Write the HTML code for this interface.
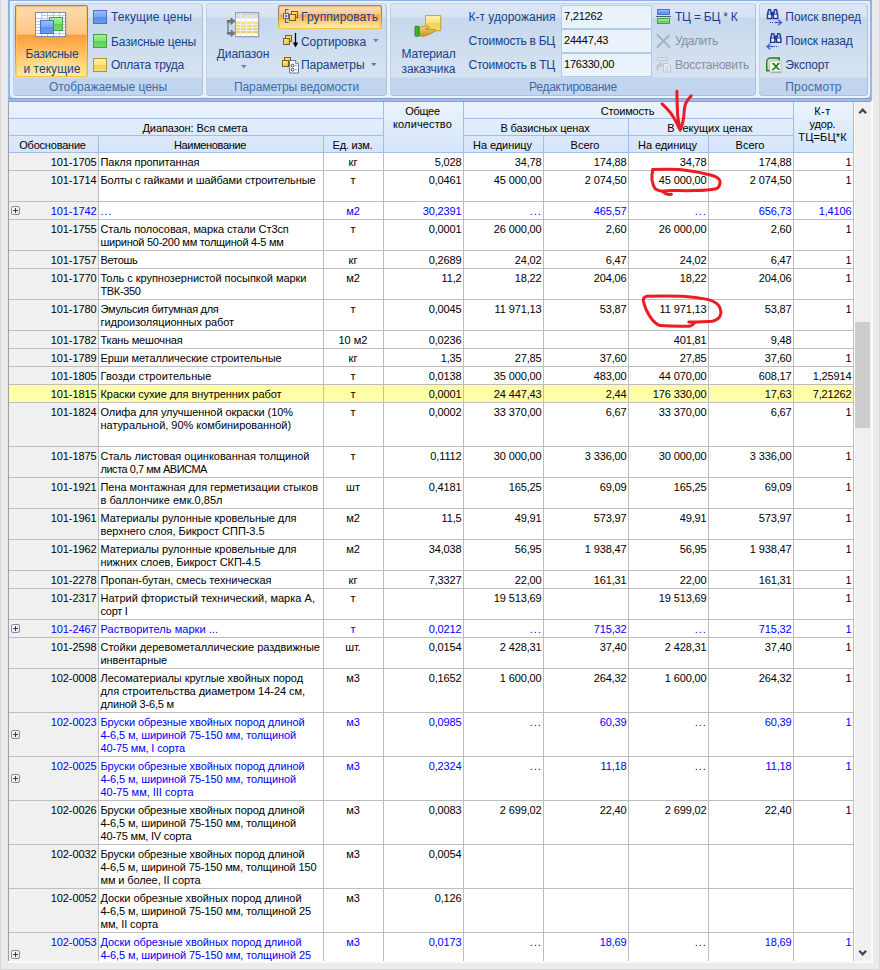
<!DOCTYPE html><html><head><meta charset="utf-8"><title>Ведомость ресурсов</title><style>
*{box-sizing:border-box;margin:0;padding:0}
html,body{width:880px;height:970px;overflow:hidden}
body{position:relative;background:#ebebeb;font-family:"Liberation Sans",sans-serif;font-size:11px;color:#000}
.abs,.c,.h,.vl,.hl,.rt{position:absolute}
#grid{position:absolute;left:8px;top:101px;width:863px;height:860px;background:#fff;overflow:hidden}
.c{height:13px;line-height:13px;white-space:nowrap;overflow:visible}
.r{text-align:right;letter-spacing:-.12px}.m{text-align:center;padding-right:1px}
.b{color:#0000ff}
.vl{width:1px;background:#bdbdbd}
.hl{height:1px;background:#bdbdbd}
.h{background:linear-gradient(#e9f1fc,#d5e5fa);border-right:1px solid #9dbfea;border-bottom:1px solid #9dbfea;text-align:center;line-height:13px;white-space:nowrap;padding-right:2px}
.pl{position:absolute;width:9px;height:9px;border:1px solid #8e8e8e;border-radius:2px;background:linear-gradient(135deg,#fff,#e4e4e4)}
.pl:before{content:"";position:absolute;left:1px;top:3px;width:5px;height:1px;background:#1c3a8c}
.pl:after{content:"";position:absolute;left:3px;top:1px;width:1px;height:5px;background:#1c3a8c}
.rt{white-space:nowrap;color:#15428b;font-size:12px;line-height:14px}
.gr{position:absolute;top:3px;height:93px;border:1px solid #a9c1de;border-left-color:#c0d2e8;border-top-color:#c3d4e9;border-radius:4px;background:linear-gradient(#dde7f5 0px,#d6e2f2 13px,#c7d8ed 14px,#d7e3f1 73px,#c1d6ee 74px,#c1d6ee 100%);box-shadow:0 0 0 2px rgba(234,243,252,.85)}
.cap{position:absolute;left:0;right:0;top:76px;height:16px;text-align:center;color:#3e6aaa;font-size:12px;line-height:14px;white-space:nowrap}
.ed{position:absolute;left:561px;width:91px;height:24px;border:1px solid #b3cbe6;background:#eaf2fb;font-size:11px;line-height:13px;padding:4px 0 0 2px;color:#000;letter-spacing:-.2px}
</style></head><body>
<div class="abs" style="left:0;top:0;width:1px;height:970px;background:#d6d6d6"></div>
<div class="abs" style="left:879px;top:0;width:1px;height:970px;background:#d8d8d8"></div>
<div class="abs" style="left:0;top:969px;width:880px;height:1px;background:#d8d8d8"></div>
<div class="abs" style="left:871px;top:101px;width:2px;height:862px;background:#fafafa"></div>
<div class="abs" style="left:8px;top:961px;width:865px;height:2px;background:#fafafa"></div>
<div id="grid">
<div class="vl" style="left:0;top:0;height:860px;background:#a0a0a0"></div>
<div class="hl" style="left:0;top:0;width:863px;background:#a0a0a0"></div>
<div class="abs" style="left:1px;top:52px;width:89px;height:808px;background:#f0f0f0"></div>
<div class="abs" style="left:847px;top:1px;width:16px;height:859px;background:#f0f0f0"></div>
<div class="abs" style="left:847px;top:221px;width:15px;height:106px;background:#cdcdcd"></div>
<svg class="abs" style="left:847px;top:4px" width="16" height="12" viewBox="0 0 16 12"><path d="M4.3 8.300L7.700 4.700L11.100 8.300" fill="none" stroke="#464646" stroke-width="2.2"/></svg>
<svg class="abs" style="left:847px;top:846px" width="16" height="12" viewBox="0 0 16 12"><path d="M4.3 3.700L7.700 7.300L11.100 3.700" fill="none" stroke="#464646" stroke-width="2.2"/></svg>
<div class="h" style="left:1px;top:1px;width:375px;height:17px;padding-top:0px;background:linear-gradient(#ebf3fd,#e4effc)"></div>
<div class="h" style="left:1px;top:18px;width:375px;height:17px;padding-top:3px;background:linear-gradient(#e4eefc,#ddeafb)"><span id="t1" style="letter-spacing:-0.084px;">Диапазон: Вся смета</span></div>
<div class="h" style="left:1px;top:35px;width:90px;height:17px;padding-top:3px;background:linear-gradient(#dde9fb,#d6e5fa)"><span id="t2" style="letter-spacing:-0.213px;">Обоснование</span></div>
<div class="h" style="left:91px;top:35px;width:225px;height:17px;padding-top:3px;background:linear-gradient(#dde9fb,#d6e5fa)"><span id="t3" style="letter-spacing:-0.355px;">Наименование</span></div>
<div class="h" style="left:316px;top:35px;width:60px;height:17px;padding-top:3px;background:linear-gradient(#dde9fb,#d6e5fa)"><span id="t4" style="letter-spacing:-0.211px;">Ед. изм.</span></div>
<div class="h" style="left:376px;top:1px;width:80px;height:51px;padding-top:3px;background:linear-gradient(#ebf3fd,#d6e5fa)"><span id="t5" style="letter-spacing:-0.306px;">Общее</span><br><span id="t6" style="letter-spacing:0.139px;">количество</span></div>
<div class="h" style="left:456px;top:1px;width:330px;height:17px;padding-top:3px;background:linear-gradient(#ebf3fd,#e4effc)"><span id="t7" style="letter-spacing:-0.175px;">Стоимость</span></div>
<div class="h" style="left:456px;top:18px;width:165px;height:17px;padding-top:3px;background:linear-gradient(#e4eefc,#ddeafb)"><span id="t8" style="letter-spacing:-0.166px;">В базисных ценах</span></div>
<div class="h" style="left:621px;top:18px;width:165px;height:17px;padding-top:3px;background:linear-gradient(#e4eefc,#ddeafb)"><span id="t9">В текущих ценах</span></div>
<div class="h" style="left:456px;top:35px;width:80px;height:17px;padding-top:3px;background:linear-gradient(#dde9fb,#d6e5fa)"><span id="t10" style="letter-spacing:-0.078px;">На единицу</span></div>
<div class="h" style="left:536px;top:35px;width:85px;height:17px;padding-top:3px;background:linear-gradient(#dde9fb,#d6e5fa)"><span id="t11">Всего</span></div>
<div class="h" style="left:621px;top:35px;width:80px;height:17px;padding-top:3px;background:linear-gradient(#dde9fb,#d6e5fa)"><span id="t12" style="letter-spacing:-0.078px;">На единицу</span></div>
<div class="h" style="left:701px;top:35px;width:85px;height:17px;padding-top:3px;background:linear-gradient(#dde9fb,#d6e5fa)"><span id="t13">Всего</span></div>
<div class="h" style="left:786px;top:1px;width:60px;height:51px;padding-top:3px;background:linear-gradient(#ebf3fd,#d6e5fa)"><span id="t14" style="letter-spacing:0.497px;">К-т</span><br><span id="t15" style="letter-spacing:-0.192px;">удор.</span><br><span id="t16" style="letter-spacing:0.153px;">ТЦ=БЦ*К</span></div>
<div class="c r" style="left:1px;top:55px;width:87.4px"><span id="t17">101-1705</span></div>
<div class="c" style="left:92.5px;top:55px;width:222px"><span id="t18" style="letter-spacing:-0.056px;">Пакля пропитанная</span></div>
<div class="c m" style="left:316px;top:55px;width:59px"><span id="t19">кг</span></div>
<div class="c r" style="left:376px;top:55px;width:77.6px"><span id="t20">5,028</span></div>
<div class="c r" style="left:456px;top:55px;width:77.6px"><span id="t21">34,78</span></div>
<div class="c r" style="left:536px;top:55px;width:82.6px"><span id="t22">174,88</span></div>
<div class="c r" style="left:621px;top:55px;width:77.6px"><span id="t23">34,78</span></div>
<div class="c r" style="left:701px;top:55px;width:82.6px"><span id="t24">174,88</span></div>
<div class="c r" style="left:786px;top:55px;width:57.6px"><span id="t25">1</span></div>
<div class="hl" style="left:1px;top:69px;width:845px"></div>
<div class="c r" style="left:1px;top:73px;width:87.4px"><span id="t26">101-1714</span></div>
<div class="c" style="left:92.5px;top:73px;width:222px"><span id="t27" style="letter-spacing:-0.108px;">Болты с гайками и шайбами строительные</span></div>
<div class="c m" style="left:316px;top:73px;width:59px"><span id="t28">т</span></div>
<div class="c r" style="left:376px;top:73px;width:77.6px"><span id="t29">0,0461</span></div>
<div class="c r" style="left:456px;top:73px;width:77.6px"><span id="t30">45 000,00</span></div>
<div class="c r" style="left:536px;top:73px;width:82.6px"><span id="t31">2 074,50</span></div>
<div class="c r" style="left:621px;top:73px;width:77.6px"><span id="t32">45 000,00</span></div>
<div class="c r" style="left:701px;top:73px;width:82.6px"><span id="t33">2 074,50</span></div>
<div class="c r" style="left:786px;top:73px;width:57.6px"><span id="t34">1</span></div>
<div class="hl" style="left:1px;top:100px;width:845px"></div>
<div class="pl" style="left:3px;top:105px"></div>
<div class="c r b" style="left:1px;top:104px;width:87.4px"><span id="t35">101-1742</span></div>
<div class="c b" style="left:92.5px;top:104px;width:222px"><span id="t36" style="letter-spacing:0.776px;">...</span></div>
<div class="c m b" style="left:316px;top:104px;width:59px"><span id="t37">м2</span></div>
<div class="c r b" style="left:376px;top:104px;width:77.6px"><span id="t38">30,2391</span></div>
<div class="c r b" style="left:456px;top:104px;width:77.6px"><span id="t39" style="letter-spacing:0.896px;">...</span></div>
<div class="c r b" style="left:536px;top:104px;width:82.6px"><span id="t40">465,57</span></div>
<div class="c r b" style="left:621px;top:104px;width:77.6px"><span id="t41" style="letter-spacing:0.896px;">...</span></div>
<div class="c r b" style="left:701px;top:104px;width:82.6px"><span id="t42">656,73</span></div>
<div class="c r b" style="left:786px;top:104px;width:57.6px"><span id="t43">1,4106</span></div>
<div class="hl" style="left:1px;top:118px;width:845px"></div>
<div class="c r" style="left:1px;top:122px;width:87.4px"><span id="t44">101-1755</span></div>
<div class="c" style="left:92.5px;top:122px;width:222px"><span id="t45" style="letter-spacing:-0.084px;">Сталь полосовая, марка стали Ст3сп</span></div>
<div class="c" style="left:92.5px;top:135px;width:222px"><span id="t46" style="letter-spacing:-0.273px;">шириной 50-200 мм толщиной 4-5 мм</span></div>
<div class="c m" style="left:316px;top:122px;width:59px"><span id="t47">т</span></div>
<div class="c r" style="left:376px;top:122px;width:77.6px"><span id="t48">0,0001</span></div>
<div class="c r" style="left:456px;top:122px;width:77.6px"><span id="t49">26 000,00</span></div>
<div class="c r" style="left:536px;top:122px;width:82.6px"><span id="t50">2,60</span></div>
<div class="c r" style="left:621px;top:122px;width:77.6px"><span id="t51">26 000,00</span></div>
<div class="c r" style="left:701px;top:122px;width:82.6px"><span id="t52">2,60</span></div>
<div class="c r" style="left:786px;top:122px;width:57.6px"><span id="t53">1</span></div>
<div class="hl" style="left:1px;top:149px;width:845px"></div>
<div class="c r" style="left:1px;top:153px;width:87.4px"><span id="t54">101-1757</span></div>
<div class="c" style="left:92.5px;top:153px;width:222px"><span id="t55" style="letter-spacing:-0.281px;">Ветошь</span></div>
<div class="c m" style="left:316px;top:153px;width:59px"><span id="t56">кг</span></div>
<div class="c r" style="left:376px;top:153px;width:77.6px"><span id="t57">0,2689</span></div>
<div class="c r" style="left:456px;top:153px;width:77.6px"><span id="t58">24,02</span></div>
<div class="c r" style="left:536px;top:153px;width:82.6px"><span id="t59">6,47</span></div>
<div class="c r" style="left:621px;top:153px;width:77.6px"><span id="t60">24,02</span></div>
<div class="c r" style="left:701px;top:153px;width:82.6px"><span id="t61">6,47</span></div>
<div class="c r" style="left:786px;top:153px;width:57.6px"><span id="t62">1</span></div>
<div class="hl" style="left:1px;top:167px;width:845px"></div>
<div class="c r" style="left:1px;top:171px;width:87.4px"><span id="t63">101-1770</span></div>
<div class="c" style="left:92.5px;top:171px;width:222px"><span id="t64" style="letter-spacing:-0.038px;">Толь с крупнозернистой посыпкой марки</span></div>
<div class="c" style="left:92.5px;top:184px;width:222px"><span id="t65" style="letter-spacing:-0.355px;">ТВК-350</span></div>
<div class="c m" style="left:316px;top:171px;width:59px"><span id="t66">м2</span></div>
<div class="c r" style="left:376px;top:171px;width:77.6px"><span id="t67">11,2</span></div>
<div class="c r" style="left:456px;top:171px;width:77.6px"><span id="t68">18,22</span></div>
<div class="c r" style="left:536px;top:171px;width:82.6px"><span id="t69">204,06</span></div>
<div class="c r" style="left:621px;top:171px;width:77.6px"><span id="t70">18,22</span></div>
<div class="c r" style="left:701px;top:171px;width:82.6px"><span id="t71">204,06</span></div>
<div class="c r" style="left:786px;top:171px;width:57.6px"><span id="t72">1</span></div>
<div class="hl" style="left:1px;top:198px;width:845px"></div>
<div class="c r" style="left:1px;top:202px;width:87.4px"><span id="t73">101-1780</span></div>
<div class="c" style="left:92.5px;top:202px;width:222px"><span id="t74" style="letter-spacing:-0.289px;">Эмульсия битумная для</span></div>
<div class="c" style="left:92.5px;top:215px;width:222px"><span id="t75" style="letter-spacing:-0.050px;">гидроизоляционных работ</span></div>
<div class="c m" style="left:316px;top:202px;width:59px"><span id="t76">т</span></div>
<div class="c r" style="left:376px;top:202px;width:77.6px"><span id="t77">0,0045</span></div>
<div class="c r" style="left:456px;top:202px;width:77.6px"><span id="t78">11 971,13</span></div>
<div class="c r" style="left:536px;top:202px;width:82.6px"><span id="t79">53,87</span></div>
<div class="c r" style="left:621px;top:202px;width:77.6px"><span id="t80">11 971,13</span></div>
<div class="c r" style="left:701px;top:202px;width:82.6px"><span id="t81">53,87</span></div>
<div class="c r" style="left:786px;top:202px;width:57.6px"><span id="t82">1</span></div>
<div class="hl" style="left:1px;top:229px;width:845px"></div>
<div class="c r" style="left:1px;top:233px;width:87.4px"><span id="t83">101-1782</span></div>
<div class="c" style="left:92.5px;top:233px;width:222px"><span id="t84" style="letter-spacing:-0.181px;">Ткань мешочная</span></div>
<div class="c m" style="left:316px;top:233px;width:59px"><span id="t85">10 м2</span></div>
<div class="c r" style="left:376px;top:233px;width:77.6px"><span id="t86">0,0236</span></div>
<div class="c r" style="left:621px;top:233px;width:77.6px"><span id="t87">401,81</span></div>
<div class="c r" style="left:701px;top:233px;width:82.6px"><span id="t88">9,48</span></div>
<div class="hl" style="left:1px;top:247px;width:845px"></div>
<div class="c r" style="left:1px;top:251px;width:87.4px"><span id="t89">101-1789</span></div>
<div class="c" style="left:92.5px;top:251px;width:222px"><span id="t90" style="letter-spacing:-0.101px;">Ерши металлические строительные</span></div>
<div class="c m" style="left:316px;top:251px;width:59px"><span id="t91">кг</span></div>
<div class="c r" style="left:376px;top:251px;width:77.6px"><span id="t92">1,35</span></div>
<div class="c r" style="left:456px;top:251px;width:77.6px"><span id="t93">27,85</span></div>
<div class="c r" style="left:536px;top:251px;width:82.6px"><span id="t94">37,60</span></div>
<div class="c r" style="left:621px;top:251px;width:77.6px"><span id="t95">27,85</span></div>
<div class="c r" style="left:701px;top:251px;width:82.6px"><span id="t96">37,60</span></div>
<div class="c r" style="left:786px;top:251px;width:57.6px"><span id="t97">1</span></div>
<div class="hl" style="left:1px;top:265px;width:845px"></div>
<div class="c r" style="left:1px;top:269px;width:87.4px"><span id="t98">101-1805</span></div>
<div class="c" style="left:92.5px;top:269px;width:222px"><span id="t99" style="letter-spacing:0.089px;">Гвозди строительные</span></div>
<div class="c m" style="left:316px;top:269px;width:59px"><span id="t100">т</span></div>
<div class="c r" style="left:376px;top:269px;width:77.6px"><span id="t101">0,0138</span></div>
<div class="c r" style="left:456px;top:269px;width:77.6px"><span id="t102">35 000,00</span></div>
<div class="c r" style="left:536px;top:269px;width:82.6px"><span id="t103">483,00</span></div>
<div class="c r" style="left:621px;top:269px;width:77.6px"><span id="t104">44 070,00</span></div>
<div class="c r" style="left:701px;top:269px;width:82.6px"><span id="t105">608,17</span></div>
<div class="c r" style="left:786px;top:269px;width:57.6px"><span id="t106">1,25914</span></div>
<div class="hl" style="left:1px;top:283px;width:845px"></div>
<div class="abs" style="left:1px;top:284px;width:844px;height:17px;background:#ffffa8"></div>
<div class="c r" style="left:1px;top:287px;width:87.4px"><span id="t107">101-1815</span></div>
<div class="c" style="left:92.5px;top:287px;width:222px"><span id="t108" style="letter-spacing:-0.055px;">Краски сухие для внутренних работ</span></div>
<div class="c m" style="left:316px;top:287px;width:59px"><span id="t109">т</span></div>
<div class="c r" style="left:376px;top:287px;width:77.6px"><span id="t110">0,0001</span></div>
<div class="c r" style="left:456px;top:287px;width:77.6px"><span id="t111">24 447,43</span></div>
<div class="c r" style="left:536px;top:287px;width:82.6px"><span id="t112">2,44</span></div>
<div class="c r" style="left:621px;top:287px;width:77.6px"><span id="t113">176 330,00</span></div>
<div class="c r" style="left:701px;top:287px;width:82.6px"><span id="t114">17,63</span></div>
<div class="c r" style="left:786px;top:287px;width:57.6px"><span id="t115">7,21262</span></div>
<div class="hl" style="left:1px;top:301px;width:845px"></div>
<div class="c r" style="left:1px;top:305px;width:87.4px"><span id="t116">101-1824</span></div>
<div class="c" style="left:92.5px;top:305px;width:222px"><span id="t117" style="letter-spacing:-0.068px;">Олифа для улучшенной окраски (10%</span></div>
<div class="c" style="left:92.5px;top:318px;width:222px"><span id="t118" style="letter-spacing:-0.036px;">натуральной, 90% комбинированной)</span></div>
<div class="c m" style="left:316px;top:305px;width:59px"><span id="t119">т</span></div>
<div class="c r" style="left:376px;top:305px;width:77.6px"><span id="t120">0,0002</span></div>
<div class="c r" style="left:456px;top:305px;width:77.6px"><span id="t121">33 370,00</span></div>
<div class="c r" style="left:536px;top:305px;width:82.6px"><span id="t122">6,67</span></div>
<div class="c r" style="left:621px;top:305px;width:77.6px"><span id="t123">33 370,00</span></div>
<div class="c r" style="left:701px;top:305px;width:82.6px"><span id="t124">6,67</span></div>
<div class="c r" style="left:786px;top:305px;width:57.6px"><span id="t125">1</span></div>
<div class="hl" style="left:1px;top:345px;width:845px"></div>
<div class="c r" style="left:1px;top:349px;width:87.4px"><span id="t126">101-1875</span></div>
<div class="c" style="left:92.5px;top:349px;width:222px"><span id="t127" style="letter-spacing:-0.019px;">Сталь листовая оцинкованная толщиной</span></div>
<div class="c" style="left:92.5px;top:362px;width:222px"><span id="t128" style="letter-spacing:-0.479px;">листа 0,7 мм АВИСМА</span></div>
<div class="c m" style="left:316px;top:349px;width:59px"><span id="t129">т</span></div>
<div class="c r" style="left:376px;top:349px;width:77.6px"><span id="t130">0,1112</span></div>
<div class="c r" style="left:456px;top:349px;width:77.6px"><span id="t131">30 000,00</span></div>
<div class="c r" style="left:536px;top:349px;width:82.6px"><span id="t132">3 336,00</span></div>
<div class="c r" style="left:621px;top:349px;width:77.6px"><span id="t133">30 000,00</span></div>
<div class="c r" style="left:701px;top:349px;width:82.6px"><span id="t134">3 336,00</span></div>
<div class="c r" style="left:786px;top:349px;width:57.6px"><span id="t135">1</span></div>
<div class="hl" style="left:1px;top:376px;width:845px"></div>
<div class="c r" style="left:1px;top:380px;width:87.4px"><span id="t136">101-1921</span></div>
<div class="c" style="left:92.5px;top:380px;width:222px"><span id="t137" style="letter-spacing:-0.043px;">Пена монтажная для герметизации стыков</span></div>
<div class="c" style="left:92.5px;top:393px;width:222px"><span id="t138" style="letter-spacing:0.018px;">в баллончике емк.0,85л</span></div>
<div class="c m" style="left:316px;top:380px;width:59px"><span id="t139">шт</span></div>
<div class="c r" style="left:376px;top:380px;width:77.6px"><span id="t140">0,4181</span></div>
<div class="c r" style="left:456px;top:380px;width:77.6px"><span id="t141">165,25</span></div>
<div class="c r" style="left:536px;top:380px;width:82.6px"><span id="t142">69,09</span></div>
<div class="c r" style="left:621px;top:380px;width:77.6px"><span id="t143">165,25</span></div>
<div class="c r" style="left:701px;top:380px;width:82.6px"><span id="t144">69,09</span></div>
<div class="c r" style="left:786px;top:380px;width:57.6px"><span id="t145">1</span></div>
<div class="hl" style="left:1px;top:407px;width:845px"></div>
<div class="c r" style="left:1px;top:411px;width:87.4px"><span id="t146">101-1961</span></div>
<div class="c" style="left:92.5px;top:411px;width:222px"><span id="t147" style="letter-spacing:-0.052px;">Материалы рулонные кровельные для</span></div>
<div class="c" style="left:92.5px;top:424px;width:222px"><span id="t148" style="letter-spacing:-0.047px;">верхнего слоя, Бикрост СПП-3.5</span></div>
<div class="c m" style="left:316px;top:411px;width:59px"><span id="t149">м2</span></div>
<div class="c r" style="left:376px;top:411px;width:77.6px"><span id="t150">11,5</span></div>
<div class="c r" style="left:456px;top:411px;width:77.6px"><span id="t151">49,91</span></div>
<div class="c r" style="left:536px;top:411px;width:82.6px"><span id="t152">573,97</span></div>
<div class="c r" style="left:621px;top:411px;width:77.6px"><span id="t153">49,91</span></div>
<div class="c r" style="left:701px;top:411px;width:82.6px"><span id="t154">573,97</span></div>
<div class="c r" style="left:786px;top:411px;width:57.6px"><span id="t155">1</span></div>
<div class="hl" style="left:1px;top:438px;width:845px"></div>
<div class="c r" style="left:1px;top:442px;width:87.4px"><span id="t156">101-1962</span></div>
<div class="c" style="left:92.5px;top:442px;width:222px"><span id="t157" style="letter-spacing:-0.052px;">Материалы рулонные кровельные для</span></div>
<div class="c" style="left:92.5px;top:455px;width:222px"><span id="t158" style="letter-spacing:-0.062px;">нижних слоев, Бикрост СКП-4.5</span></div>
<div class="c m" style="left:316px;top:442px;width:59px"><span id="t159">м2</span></div>
<div class="c r" style="left:376px;top:442px;width:77.6px"><span id="t160">34,038</span></div>
<div class="c r" style="left:456px;top:442px;width:77.6px"><span id="t161">56,95</span></div>
<div class="c r" style="left:536px;top:442px;width:82.6px"><span id="t162">1 938,47</span></div>
<div class="c r" style="left:621px;top:442px;width:77.6px"><span id="t163">56,95</span></div>
<div class="c r" style="left:701px;top:442px;width:82.6px"><span id="t164">1 938,47</span></div>
<div class="c r" style="left:786px;top:442px;width:57.6px"><span id="t165">1</span></div>
<div class="hl" style="left:1px;top:469px;width:845px"></div>
<div class="c r" style="left:1px;top:473px;width:87.4px"><span id="t166">101-2278</span></div>
<div class="c" style="left:92.5px;top:473px;width:222px"><span id="t167" style="letter-spacing:-0.071px;">Пропан-бутан, смесь техническая</span></div>
<div class="c m" style="left:316px;top:473px;width:59px"><span id="t168">кг</span></div>
<div class="c r" style="left:376px;top:473px;width:77.6px"><span id="t169">7,3327</span></div>
<div class="c r" style="left:456px;top:473px;width:77.6px"><span id="t170">22,00</span></div>
<div class="c r" style="left:536px;top:473px;width:82.6px"><span id="t171">161,31</span></div>
<div class="c r" style="left:621px;top:473px;width:77.6px"><span id="t172">22,00</span></div>
<div class="c r" style="left:701px;top:473px;width:82.6px"><span id="t173">161,31</span></div>
<div class="c r" style="left:786px;top:473px;width:57.6px"><span id="t174">1</span></div>
<div class="hl" style="left:1px;top:487px;width:845px"></div>
<div class="c r" style="left:1px;top:491px;width:87.4px"><span id="t175">101-2317</span></div>
<div class="c" style="left:92.5px;top:491px;width:222px"><span id="t176" style="letter-spacing:0.025px;">Натрий фтористый технический, марка А,</span></div>
<div class="c" style="left:92.5px;top:504px;width:222px"><span id="t177" style="letter-spacing:-0.297px;">сорт I</span></div>
<div class="c m" style="left:316px;top:491px;width:59px"><span id="t178">т</span></div>
<div class="c r" style="left:456px;top:491px;width:77.6px"><span id="t179">19 513,69</span></div>
<div class="c r" style="left:621px;top:491px;width:77.6px"><span id="t180">19 513,69</span></div>
<div class="c r" style="left:786px;top:491px;width:57.6px"><span id="t181">1</span></div>
<div class="hl" style="left:1px;top:518px;width:845px"></div>
<div class="pl" style="left:3px;top:523px"></div>
<div class="c r b" style="left:1px;top:522px;width:87.4px"><span id="t182">101-2467</span></div>
<div class="c b" style="left:92.5px;top:522px;width:222px"><span id="t183" style="letter-spacing:0.041px;">Растворитель марки ...</span></div>
<div class="c m b" style="left:316px;top:522px;width:59px"><span id="t184">т</span></div>
<div class="c r b" style="left:376px;top:522px;width:77.6px"><span id="t185">0,0212</span></div>
<div class="c r b" style="left:456px;top:522px;width:77.6px"><span id="t186" style="letter-spacing:0.896px;">...</span></div>
<div class="c r b" style="left:536px;top:522px;width:82.6px"><span id="t187">715,32</span></div>
<div class="c r b" style="left:621px;top:522px;width:77.6px"><span id="t188" style="letter-spacing:0.896px;">...</span></div>
<div class="c r b" style="left:701px;top:522px;width:82.6px"><span id="t189">715,32</span></div>
<div class="c r b" style="left:786px;top:522px;width:57.6px"><span id="t190">1</span></div>
<div class="hl" style="left:1px;top:536px;width:845px"></div>
<div class="c r" style="left:1px;top:540px;width:87.4px"><span id="t191">101-2598</span></div>
<div class="c" style="left:92.5px;top:540px;width:222px"><span id="t192" style="letter-spacing:0.004px;">Стойки деревометаллические раздвижные</span></div>
<div class="c" style="left:92.5px;top:553px;width:222px"><span id="t193" style="letter-spacing:-0.081px;">инвентарные</span></div>
<div class="c m" style="left:316px;top:540px;width:59px"><span id="t194">шт.</span></div>
<div class="c r" style="left:376px;top:540px;width:77.6px"><span id="t195">0,0154</span></div>
<div class="c r" style="left:456px;top:540px;width:77.6px"><span id="t196">2 428,31</span></div>
<div class="c r" style="left:536px;top:540px;width:82.6px"><span id="t197">37,40</span></div>
<div class="c r" style="left:621px;top:540px;width:77.6px"><span id="t198">2 428,31</span></div>
<div class="c r" style="left:701px;top:540px;width:82.6px"><span id="t199">37,40</span></div>
<div class="c r" style="left:786px;top:540px;width:57.6px"><span id="t200">1</span></div>
<div class="hl" style="left:1px;top:567px;width:845px"></div>
<div class="c r" style="left:1px;top:571px;width:87.4px"><span id="t201">102-0008</span></div>
<div class="c" style="left:92.5px;top:571px;width:222px"><span id="t202" style="letter-spacing:-0.083px;">Лесоматериалы круглые хвойных пород</span></div>
<div class="c" style="left:92.5px;top:584px;width:222px"><span id="t203" style="letter-spacing:-0.046px;">для строительства диаметром 14-24 см,</span></div>
<div class="c" style="left:92.5px;top:597px;width:222px"><span id="t204" style="letter-spacing:-0.184px;">длиной 3-6,5 м</span></div>
<div class="c m" style="left:316px;top:571px;width:59px"><span id="t205">м3</span></div>
<div class="c r" style="left:376px;top:571px;width:77.6px"><span id="t206">0,1652</span></div>
<div class="c r" style="left:456px;top:571px;width:77.6px"><span id="t207">1 600,00</span></div>
<div class="c r" style="left:536px;top:571px;width:82.6px"><span id="t208">264,32</span></div>
<div class="c r" style="left:621px;top:571px;width:77.6px"><span id="t209">1 600,00</span></div>
<div class="c r" style="left:701px;top:571px;width:82.6px"><span id="t210">264,32</span></div>
<div class="c r" style="left:786px;top:571px;width:57.6px"><span id="t211">1</span></div>
<div class="hl" style="left:1px;top:611px;width:845px"></div>
<div class="pl" style="left:3px;top:629px"></div>
<div class="c r b" style="left:1px;top:615px;width:87.4px"><span id="t212">102-0023</span></div>
<div class="c b" style="left:92.5px;top:615px;width:222px"><span id="t213" style="letter-spacing:-0.100px;">Бруски обрезные хвойных пород длиной</span></div>
<div class="c b" style="left:92.5px;top:628px;width:222px"><span id="t214" style="letter-spacing:-0.117px;">4-6,5 м, шириной 75-150 мм, толщиной</span></div>
<div class="c b" style="left:92.5px;top:641px;width:222px"><span id="t215" style="letter-spacing:-0.159px;">40-75 мм, I сорта</span></div>
<div class="c m b" style="left:316px;top:615px;width:59px"><span id="t216">м3</span></div>
<div class="c r b" style="left:376px;top:615px;width:77.6px"><span id="t217">0,0985</span></div>
<div class="c r b" style="left:456px;top:615px;width:77.6px"><span id="t218" style="letter-spacing:0.896px;">...</span></div>
<div class="c r b" style="left:536px;top:615px;width:82.6px"><span id="t219">60,39</span></div>
<div class="c r b" style="left:621px;top:615px;width:77.6px"><span id="t220" style="letter-spacing:0.896px;">...</span></div>
<div class="c r b" style="left:701px;top:615px;width:82.6px"><span id="t221">60,39</span></div>
<div class="c r b" style="left:786px;top:615px;width:57.6px"><span id="t222">1</span></div>
<div class="hl" style="left:1px;top:655px;width:845px"></div>
<div class="pl" style="left:3px;top:673px"></div>
<div class="c r b" style="left:1px;top:659px;width:87.4px"><span id="t223">102-0025</span></div>
<div class="c b" style="left:92.5px;top:659px;width:222px"><span id="t224" style="letter-spacing:-0.100px;">Бруски обрезные хвойных пород длиной</span></div>
<div class="c b" style="left:92.5px;top:672px;width:222px"><span id="t225" style="letter-spacing:-0.117px;">4-6,5 м, шириной 75-150 мм, толщиной</span></div>
<div class="c b" style="left:92.5px;top:685px;width:222px"><span id="t226" style="letter-spacing:-0.016px;">40-75 мм, III сорта</span></div>
<div class="c m b" style="left:316px;top:659px;width:59px"><span id="t227">м3</span></div>
<div class="c r b" style="left:376px;top:659px;width:77.6px"><span id="t228">0,2324</span></div>
<div class="c r b" style="left:456px;top:659px;width:77.6px"><span id="t229" style="letter-spacing:0.896px;">...</span></div>
<div class="c r b" style="left:536px;top:659px;width:82.6px"><span id="t230">11,18</span></div>
<div class="c r b" style="left:621px;top:659px;width:77.6px"><span id="t231" style="letter-spacing:0.896px;">...</span></div>
<div class="c r b" style="left:701px;top:659px;width:82.6px"><span id="t232">11,18</span></div>
<div class="c r b" style="left:786px;top:659px;width:57.6px"><span id="t233">1</span></div>
<div class="hl" style="left:1px;top:699px;width:845px"></div>
<div class="c r" style="left:1px;top:703px;width:87.4px"><span id="t234">102-0026</span></div>
<div class="c" style="left:92.5px;top:703px;width:222px"><span id="t235" style="letter-spacing:-0.100px;">Бруски обрезные хвойных пород длиной</span></div>
<div class="c" style="left:92.5px;top:716px;width:222px"><span id="t236" style="letter-spacing:-0.117px;">4-6,5 м, шириной 75-150 мм, толщиной</span></div>
<div class="c" style="left:92.5px;top:729px;width:222px"><span id="t237" style="letter-spacing:-0.196px;">40-75 мм, IV сорта</span></div>
<div class="c m" style="left:316px;top:703px;width:59px"><span id="t238">м3</span></div>
<div class="c r" style="left:376px;top:703px;width:77.6px"><span id="t239">0,0083</span></div>
<div class="c r" style="left:456px;top:703px;width:77.6px"><span id="t240">2 699,02</span></div>
<div class="c r" style="left:536px;top:703px;width:82.6px"><span id="t241">22,40</span></div>
<div class="c r" style="left:621px;top:703px;width:77.6px"><span id="t242">2 699,02</span></div>
<div class="c r" style="left:701px;top:703px;width:82.6px"><span id="t243">22,40</span></div>
<div class="c r" style="left:786px;top:703px;width:57.6px"><span id="t244">1</span></div>
<div class="hl" style="left:1px;top:743px;width:845px"></div>
<div class="c r" style="left:1px;top:747px;width:87.4px"><span id="t245">102-0032</span></div>
<div class="c" style="left:92.5px;top:747px;width:222px"><span id="t246" style="letter-spacing:-0.100px;">Бруски обрезные хвойных пород длиной</span></div>
<div class="c" style="left:92.5px;top:760px;width:222px"><span id="t247" style="letter-spacing:-0.128px;">4-6,5 м, шириной 75-150 мм, толщиной 150</span></div>
<div class="c" style="left:92.5px;top:773px;width:222px"><span id="t248" style="letter-spacing:-0.108px;">мм и более, II сорта</span></div>
<div class="c m" style="left:316px;top:747px;width:59px"><span id="t249">м3</span></div>
<div class="c r" style="left:376px;top:747px;width:77.6px"><span id="t250">0,0054</span></div>
<div class="hl" style="left:1px;top:787px;width:845px"></div>
<div class="c r" style="left:1px;top:791px;width:87.4px"><span id="t251">102-0052</span></div>
<div class="c" style="left:92.5px;top:791px;width:222px"><span id="t252" style="letter-spacing:-0.049px;">Доски обрезные хвойных пород длиной</span></div>
<div class="c" style="left:92.5px;top:804px;width:222px"><span id="t253" style="letter-spacing:-0.116px;">4-6,5 м, шириной 75-150 мм, толщиной 25</span></div>
<div class="c" style="left:92.5px;top:817px;width:222px"><span id="t254" style="letter-spacing:-0.130px;">мм, II сорта</span></div>
<div class="c m" style="left:316px;top:791px;width:59px"><span id="t255">м3</span></div>
<div class="c r" style="left:376px;top:791px;width:77.6px"><span id="t256">0,126</span></div>
<div class="hl" style="left:1px;top:831px;width:845px"></div>
<div class="pl" style="left:3px;top:849px"></div>
<div class="c r b" style="left:1px;top:835px;width:87.4px"><span id="t257">102-0053</span></div>
<div class="c b" style="left:92.5px;top:835px;width:222px"><span id="t258" style="letter-spacing:-0.049px;">Доски обрезные хвойных пород длиной</span></div>
<div class="c b" style="left:92.5px;top:848px;width:222px"><span id="t259" style="letter-spacing:-0.116px;">4-6,5 м, шириной 75-150 мм, толщиной 25</span></div>
<div class="c b" style="left:92.5px;top:861px;width:222px"><span id="t260" style="letter-spacing:-0.130px;">мм, II сорта</span></div>
<div class="c m b" style="left:316px;top:835px;width:59px"><span id="t261">м3</span></div>
<div class="c r b" style="left:376px;top:835px;width:77.6px"><span id="t262">0,0173</span></div>
<div class="c r b" style="left:456px;top:835px;width:77.6px"><span id="t263" style="letter-spacing:0.896px;">...</span></div>
<div class="c r b" style="left:536px;top:835px;width:82.6px"><span id="t264">18,69</span></div>
<div class="c r b" style="left:621px;top:835px;width:77.6px"><span id="t265" style="letter-spacing:0.896px;">...</span></div>
<div class="c r b" style="left:701px;top:835px;width:82.6px"><span id="t266">18,69</span></div>
<div class="c r b" style="left:786px;top:835px;width:57.6px"><span id="t267">1</span></div>
<div class="hl" style="left:1px;top:875px;width:845px"></div>
<div class="vl" style="left:90px;top:52px;height:808px"></div>
<div class="vl" style="left:315px;top:52px;height:808px"></div>
<div class="vl" style="left:375px;top:52px;height:808px"></div>
<div class="vl" style="left:455px;top:52px;height:808px"></div>
<div class="vl" style="left:535px;top:52px;height:808px"></div>
<div class="vl" style="left:620px;top:52px;height:808px"></div>
<div class="vl" style="left:700px;top:52px;height:808px"></div>
<div class="vl" style="left:785px;top:52px;height:808px"></div>
<div class="vl" style="left:845px;top:52px;height:808px"></div>
</div>
<div class="abs" style="left:8px;top:0;width:864px;height:101px;background:linear-gradient(#8eb1e5 0,#8eb1e5 1px,#97b8e8 60px,#98b8e6 98px,#84a2cc 98px,#84a2cc 99px,#9cbbe6 99px,#9cbbe6 101px)"></div>
<div class="abs" style="left:10px;top:1px;width:860px;height:97px;border:1px solid #def3ff;border-top-color:#e6f0fb;border-bottom-color:#c6f0fc;border-radius:0 0 4px 4px;background:linear-gradient(#dfe9f7 0,#d3e1f2 15px,#c6d8ee 16px,#cfdff1 75px,#c3d7ef 76px,#c6daf1 93px,#eef8ff 94px,#eef8ff 95px)"></div>
<div class="gr" style="left:13px;width:190px"><div class="cap"><span id="t268" style="letter-spacing:-0.030px;">Отображаемые цены</span></div></div>
<div class="gr" style="left:206px;width:181px"><div class="cap"><span id="t269" style="letter-spacing:-0.092px;">Параметры ведомости</span></div></div>
<div class="gr" style="left:390px;width:366px"><div class="cap"><span id="t270" style="letter-spacing:-0.244px;">Редактирование</span></div></div>
<div class="gr" style="left:759px;width:109px"><div class="cap"><span id="t271" style="letter-spacing:0.211px;">Просмотр</span></div></div>
<div class="abs" style="left:15px;top:5px;width:73px;height:72px;background:linear-gradient(#8e8165 0,#968660 45%,#d9ae52 80%,#fbc53a 100%);border-radius:2px"><div class="abs" style="left:1px;top:1px;right:1px;bottom:1px;box-shadow:inset 1px 0 0 rgba(252,198,90,.85),inset -1px 0 0 rgba(252,198,90,.85);border-radius:1px;background:radial-gradient(ellipse 60% 45% at 50% 100%,rgba(255,244,180,.75),rgba(255,244,180,0) 100%),linear-gradient(#dcb98c 0,#f6d1a2 1px,#fdd9ab 3px,#fcc787 28px,#fb9d3d 29px,#fdc466 50px,#fee293 70px)"></div></div>
<svg class="abs" style="left:33px;top:10px" width="36" height="30" viewBox="0 0 36 30">
<defs>
<linearGradient id="gB" x1="0" y1="0" x2="0" y2="1"><stop offset="0" stop-color="#9cc0fa"/><stop offset=".5" stop-color="#78a3f3"/><stop offset=".5" stop-color="#5f8eea"/><stop offset="1" stop-color="#6b9af0"/></linearGradient>
<linearGradient id="gG" x1="0" y1="0" x2="0" y2="1"><stop offset="0" stop-color="#a6f0a0"/><stop offset=".5" stop-color="#7de27a"/><stop offset=".5" stop-color="#5dd15a"/><stop offset="1" stop-color="#6fdc6b"/></linearGradient>
<linearGradient id="gY" x1="0" y1="0" x2="0" y2="1"><stop offset="0" stop-color="#fff1a6"/><stop offset=".5" stop-color="#fbe27d"/><stop offset=".5" stop-color="#f2d056"/><stop offset="1" stop-color="#f8dc6e"/></linearGradient>
</defs>
<rect x="3" y="3" width="31" height="25" fill="#9aa0a8" opacity=".35"/>
<rect x="2.5" y="2.5" width="30" height="24" fill="#fff"/>
<path d="M8.5 5.5H32.5M2.5 8.5H32.5M2.5 11.5H32.5M2.5 14.5H32.5M2.5 17.5H32.5M2.5 20.5H32.5M2.5 23.5H32.5M8.5 2.5V26.5M14.5 2.5V26.5M20.5 2.5V26.5M26.5 2.5V26.5" stroke="#bcc8da" stroke-width="1"/>
<rect x="2.5" y="2.5" width="30" height="24" fill="none" stroke="#7990b0"/>
<rect x="16.5" y="7.5" width="13" height="13" fill="url(#gG)" stroke="#46a046"/>
<rect x="7.5" y="10.5" width="13" height="13" fill="url(#gB)" stroke="#4a72c8"/>
</svg>
<div class="rt" style="left:-8px;top:47px;width:120px;text-align:center;"><span id="t272" style="letter-spacing:-0.193px;">Базисные</span></div>
<div class="rt" style="left:-8px;top:61.5px;width:120px;text-align:center;"><span id="t273" style="letter-spacing:0.031px;">и текущие</span></div>
<svg class="abs" style="left:93px;top:10px" width="16" height="16" viewBox="0 0 16 16"><rect x=".5" y=".5" width="13" height="13" fill="url(#gB)" stroke="#4a72c8"/></svg>
<svg class="abs" style="left:93px;top:34px" width="16" height="16" viewBox="0 0 16 16"><rect x=".5" y=".5" width="13" height="13" fill="url(#gG)" stroke="#46a046"/></svg>
<svg class="abs" style="left:93px;top:58px" width="16" height="16" viewBox="0 0 16 16"><rect x=".5" y=".5" width="13" height="13" fill="url(#gY)" stroke="#b39532"/></svg>
<div class="rt" style="left:111px;top:10px;"><span id="t274" style="letter-spacing:0.086px;">Текущие цены</span></div>
<div class="rt" style="left:111px;top:34.5px;"><span id="t275" style="letter-spacing:-0.119px;">Базисные цены</span></div>
<div class="rt" style="left:111px;top:58px;"><span id="t276" style="letter-spacing:-0.245px;">Оплата труда</span></div>
<svg class="abs" style="left:225px;top:10px" width="36" height="30" viewBox="0 0 36 30">
<defs><linearGradient id="gY2" x1="0" y1="0" x2="0" y2="1"><stop offset="0" stop-color="#fbe682"/><stop offset="1" stop-color="#f3cf4a"/></linearGradient></defs><rect x="11" y="3" width="24" height="25" fill="#9aa0a8" opacity=".3"/>
<rect x="10.5" y="2.5" width="23" height="24" fill="#fff" stroke="#98a2b2"/>
<rect x="11" y="3" width="22" height="6" fill="#d4d6da"/>
<rect x="11" y="11.500" width="22" height="12" fill="url(#gY2)"/>
<path d="M10.5 8.500H33.5M11 11.500H33M11 14.500H33M11 17.500H33M11 20.500H33M11 23.500H33M15.5 3V26M21.5 6V26M27.5 6V26" stroke="#eceef2" stroke-width="1"/>
<path d="M11 6H33" stroke="#e9eaee"/>
<path d="M3 10.5V23.5" stroke="#6b6b6b" stroke-width="1.2" fill="none"/>
<path d="M2.4 10.5H6V8L10 11.2L6 14.4V12.2H2.4Z" fill="#7a7a7a" stroke="#555" stroke-width=".6"/>
<path d="M2.4 22.5H6V20L10 23.2L6 26.4V24.2H2.4Z" fill="#7a7a7a" stroke="#555" stroke-width=".6"/>
</svg>
<div class="rt" style="left:183px;top:47px;width:120px;text-align:center;"><span id="t277" style="letter-spacing:-0.090px;">Диапазон</span></div>
<svg class="abs" style="left:240.7px;top:65.4px" width="6" height="4" viewBox="0 0 6 4"><path d="M0 0H5.6L2.8 3.2Z" fill="#5a80b4"/></svg>
<div class="abs" style="left:278px;top:5px;width:104px;height:24px;background:linear-gradient(#8e8165 0,#968660 45%,#d9ae52 80%,#fbc53a 100%);border-radius:2px"><div class="abs" style="left:1px;top:1px;right:1px;bottom:1px;box-shadow:inset 1px 0 0 rgba(252,198,90,.85),inset -1px 0 0 rgba(252,198,90,.85);border-radius:1px;background:radial-gradient(ellipse 60% 50% at 50% 100%,rgba(255,244,180,.6),rgba(255,244,180,0) 100%),linear-gradient(#dcb98c 0,#f6d1a2 1px,#fdd9ab 3px,#fcc787 8px,#fba447 9px,#fdcf72 17px,#fee49a 22px)"></div></div>
<svg class="abs" style="left:282px;top:8px" width="18" height="18" viewBox="0 0 18 18">
<defs><linearGradient id="gQ" x1="0" y1="0" x2="1" y2="1"><stop offset="0" stop-color="#fff3b8"/><stop offset=".6" stop-color="#f4cf55"/><stop offset="1" stop-color="#dba92c"/></linearGradient></defs>
<path d="M6.5 1.5H3.5V14.5H6.5" fill="none" stroke="#3a5f9e" stroke-width="1"/>
<rect x="1.5" y="5.500" width="5" height="5" fill="#fff" stroke="#5b6f8e" stroke-width="1"/>
<path d="M2.5 8H5.5M4 6.5V9.500" stroke="#24458c" stroke-width="1"/>
<rect x="9.5" y="3.5" width="6" height="6" fill="url(#gQ)" stroke="#7d5f1a" stroke-width="1"/><rect x="7.5" y="6.5" width="6" height="6" fill="url(#gQ)" stroke="#7d5f1a" stroke-width="1"/></svg>
<svg class="abs" style="left:282px;top:32px" width="18" height="18" viewBox="0 0 18 18">
<rect x="3.5" y="3.5" width="6" height="6" fill="url(#gQ)" stroke="#7d5f1a" stroke-width="1"/><rect x="1.5" y="6.5" width="6" height="6" fill="url(#gQ)" stroke="#7d5f1a" stroke-width="1"/>
<path d="M13.500 1V14" stroke="#000" stroke-width="1.3"/><path d="M10.8 10.500L13.500 15.500L16.2 10.500Z" fill="#000"/>
</svg>
<svg class="abs" style="left:282px;top:56px" width="18" height="18" viewBox="0 0 18 18">
<rect x="2.5" y="1.5" width="6" height="6" fill="url(#gQ)" stroke="#7d5f1a" stroke-width="1"/><rect x="0.5" y="4.5" width="6" height="6" fill="url(#gQ)" stroke="#7d5f1a" stroke-width="1"/>
<path d="M7.500 4.500H13.500L16.500 7.500V17H7.500Z" fill="#fafbfd" stroke="#6c7c98" stroke-width="1"/>
<path d="M13.500 4.500V7.500H16.500" fill="#dfe6f0" stroke="#6c7c98" stroke-width=".8"/>
<circle cx="10.5" cy="9.500" r="1.400" fill="#fff" stroke="#333" stroke-width=".9"/><circle cx="10.5" cy="13.700" r="1.400" fill="#fff" stroke="#333" stroke-width=".9"/>
<path d="M13 9.500H15M13 13.700H15" stroke="#8894aa" stroke-width=".9"/>
</svg>
<div class="rt" style="left:301px;top:10px;"><span id="t278" style="letter-spacing:0.099px;">Группировать</span></div>
<div class="rt" style="left:301px;top:34.5px;"><span id="t279" style="letter-spacing:-0.086px;">Сортировка</span></div>
<div class="rt" style="left:301px;top:58px;"><span id="t280" style="letter-spacing:-0.052px;">Параметры</span></div>
<svg class="abs" style="left:373.2px;top:38.9px" width="6" height="4" viewBox="0 0 6 4"><path d="M0 0H5.6L2.8 3.2Z" fill="#5a80b4"/></svg>
<svg class="abs" style="left:370.7px;top:63.4px" width="6" height="4" viewBox="0 0 6 4"><path d="M0 0H5.6L2.8 3.2Z" fill="#5a80b4"/></svg>
<svg class="abs" style="left:412px;top:12px" width="32" height="28" viewBox="0 0 32 28">
<defs><linearGradient id="gH" x1="0" y1="0" x2="0" y2="1"><stop offset="0" stop-color="#f3d27a"/><stop offset="1" stop-color="#c9951f"/></linearGradient></defs>
<rect x="14" y="4" width="15.500" height="15.500" fill="#7f8fa8" opacity=".3"/>
<rect x="13.5" y="3.500" width="15" height="15" fill="url(#gY)" stroke="#c9aa45"/>
<path d="M7 15.500C10 13.800 13 13.800 16 14.300C17.500 14.600 18 15.800 17 16.300L13.500 16.800C15 17.600 19 17.300 22.500 17.300C24 17.500 24 18.800 23 19.300C19 21.800 15 23.800 11.500 24.300L7 23.800Z" fill="url(#gH)" stroke="#a97b12" stroke-width=".7"/>
<rect x="3" y="14.200" width="4" height="10" rx=".8" fill="#35b335" stroke="#1c8a1c" stroke-width=".9"/>
</svg>
<div class="rt" style="left:368.5px;top:47px;width:120px;text-align:center;"><span id="t281" style="letter-spacing:-0.205px;">Материал</span></div>
<div class="rt" style="left:368.5px;top:61.5px;width:120px;text-align:center;"><span id="t282" style="letter-spacing:-0.054px;">заказчика</span></div>
<div class="rt" style="left:468.5px;top:9.5px;"><span id="t283" style="letter-spacing:0.011px;">К-т удорожания</span></div>
<div class="rt" style="left:468.5px;top:33.5px;"><span id="t284" style="letter-spacing:-0.241px;">Стоимость в БЦ</span></div>
<div class="rt" style="left:468.5px;top:58px;"><span id="t285" style="letter-spacing:-0.202px;">Стоимость в ТЦ</span></div>
<div class="ed" style="top:5px"><span id="t286">7,21262</span></div>
<div class="ed" style="top:29px"><span id="t287">24447,43</span></div>
<div class="ed" style="top:53px"><span id="t288">176330,00</span></div>
<svg class="abs" style="left:655px;top:8px" width="17" height="17" viewBox="0 0 17 17">
<rect x="2.500" y="1.500" width="12" height="5" fill="url(#gB)" stroke="#4a72c8"/>
<path d="M1 8.500H16" stroke="#4d5b70" stroke-width="1"/>
<rect x="2.500" y="10.500" width="12" height="5" fill="url(#gG)" stroke="#46a046"/>
</svg>
<svg class="abs" style="left:655px;top:32px" width="17" height="17" viewBox="0 0 17 17">
<path d="M2.500 3L14.500 15M14 3.500L2.500 15" stroke="#a9afb9" stroke-width="1.800" stroke-linecap="round" fill="none"/>
</svg>
<svg class="abs" style="left:655px;top:56px" width="17" height="17" viewBox="0 0 17 17" opacity=".8">
<rect x="2.500" y="1.500" width="10" height="3" fill="#dfe3e9" stroke="#b3b8c2" stroke-width=".8"/>
<path d="M3 15C1 12 1.500 8.500 5 7.500V6L8 8.500L5 11V9.500C3.500 10.500 3 12.500 3 15Z" fill="#c3c8d0" stroke="#aeb3bd" stroke-width=".6"/>
<path d="M8.500 7.500H13L15.500 10V16H8.500Z" fill="#eef0f4" stroke="#b3b8c2" stroke-width=".9"/>
<path d="M10.500 10.500H13V12H10.800V14H13.300" fill="none" stroke="#c3c7cf" stroke-width=".9"/>
</svg>
<div class="rt" style="left:675px;top:10px;"><span id="t289" style="letter-spacing:-0.215px;">ТЦ = БЦ * К</span></div>
<div class="rt" style="left:675px;top:34px;color:#8c8e9b"><span id="t290" style="letter-spacing:-0.447px;">Удалить</span></div>
<div class="rt" style="left:675px;top:57.5px;color:#8c8e9b"><span id="t291" style="letter-spacing:-0.237px;">Восстановить</span></div>
<svg class="abs" style="left:764px;top:7px" width="20" height="19" viewBox="0 0 20 19"><g transform="translate(2.8 2.2)"><path d="M0.5 9.500V5.500L1.7 .5H3.8L5 5.500V9.500Z" fill="#5d76c6" stroke="#1e3690" stroke-width="1.200"/><rect x="1.5" y="5.800" width="2.500" height="2.700" fill="#fff"/><rect x="2.3" y="1.500" width="1" height="3" fill="#d5defa"/><path d="M6.5 9.500V5.500L7.7 .5H9.8L11 5.500V9.500Z" fill="#5d76c6" stroke="#1e3690" stroke-width="1.200"/><rect x="7.5" y="5.800" width="2.500" height="2.700" fill="#fff"/><rect x="8.3" y="1.500" width="1" height="3" fill="#d5defa"/><rect x="4.600" y="2.500" width="2.300" height="4" fill="#1e3690"/></g><path d="M6 15.500H10" stroke="#2b4aa8" stroke-width="1" stroke-dasharray="1 1"/><path d="M14.200 12.800L17.500 15.500L14.200 18.200" fill="none" stroke="#3b5fc4" stroke-width="1.300"/><path d="M10.500 15.500H17" stroke="#3b5fc4" stroke-width="1.300"/></svg>
<svg class="abs" style="left:764px;top:31px" width="20" height="19" viewBox="0 0 20 19"><g transform="translate(6 2)"><path d="M0.5 9.500V5.500L1.7 .5H3.8L5 5.500V9.500Z" fill="#5d76c6" stroke="#1e3690" stroke-width="1.200"/><rect x="1.5" y="5.800" width="2.500" height="2.700" fill="#fff"/><rect x="2.3" y="1.500" width="1" height="3" fill="#d5defa"/><path d="M6.5 9.500V5.500L7.7 .5H9.8L11 5.500V9.500Z" fill="#5d76c6" stroke="#1e3690" stroke-width="1.200"/><rect x="7.5" y="5.800" width="2.500" height="2.700" fill="#fff"/><rect x="8.3" y="1.500" width="1" height="3" fill="#d5defa"/><rect x="4.600" y="2.500" width="2.300" height="4" fill="#1e3690"/></g><path d="M10 15.500H14.500" stroke="#2b4aa8" stroke-width="1" stroke-dasharray="1 1"/><path d="M6.300 12.800L3 15.500L6.300 18.200" fill="none" stroke="#3b5fc4" stroke-width="1.300"/><path d="M3.500 15.500H9.500" stroke="#3b5fc4" stroke-width="1.300"/></svg>
<svg class="abs" style="left:765px;top:56px" width="18" height="18" viewBox="0 0 18 18">
<defs><linearGradient id="gX" x1="0" y1="0" x2="1" y2="1"><stop offset="0" stop-color="#eaf6e4"/><stop offset="1" stop-color="#8fcc7e"/></linearGradient></defs>
<path d="M1.700 14.800V6C1.700 3.200 3.500 2 6 2H14.300V6H5.500V14.800Z" fill="url(#gX)" stroke="#1f7a1f" stroke-width="1.400" stroke-linejoin="round"/>
<path d="M5.500 16.800L16.800 16.300" stroke="#666" stroke-width="1" opacity=".45"/>
<path d="M4.300 5.300L15.800 4.600L16.400 15.300L4.800 16Z" fill="#f7fbf4" stroke="#a9b5a6" stroke-width=".7"/>
<path d="M6.600 7.200L10 10.600L6.200 14.300H8.700L11.100 11.800L13.200 14.100H15.400L12.200 10.500L15.100 6.800H12.800L11.100 9.200L9.100 7.100Z" fill="#2a7a1e"/>
</svg>
<div class="rt" style="left:785.3px;top:10px;"><span id="t292" style="letter-spacing:-0.043px;">Поиск вперед</span></div>
<div class="rt" style="left:785.3px;top:34px;"><span id="t293" style="letter-spacing:-0.140px;">Поиск назад</span></div>
<div class="rt" style="left:785.3px;top:57.5px;"><span id="t294" style="letter-spacing:-0.128px;">Экспорт</span></div>
<svg class="abs" style="left:0;top:0" width="880" height="970" viewBox="0 0 880 970" fill="none" stroke="#ed1c24" stroke-width="3" stroke-linecap="round" stroke-linejoin="round">
<path d="M676.9 91.3 C677 100 677.3 108 677.6 115 C678.3 121 679.3 125.5 680 129.2"/>
<path d="M662 103.8 C666 107.5 669 110.5 671.3 113.8 C674.5 118.5 677.5 124 679.6 128.8"/>
<path d="M691.2 95.8 C688.5 98.8 686 102 685 105.5 C684 110 684.2 114 683.6 118 C683 122.5 681.8 126 680.6 129.3"/>
<path d="M652.8 169.6 C661 169.2 670 169.2 678.8 169.4 C686 170 693 171.2 700 172.6 C705.5 173.8 711 174.8 715 176.4 C718.5 178 720.5 180.5 720 183.2 C719.6 186 718.5 187.8 716 188.8 C709.5 190.2 702 190.5 695 190.6 C687 190.7 679 190.6 671.2 190.6 C668 190.7 665 191 662.5 191.3 C664 192.6 666 193.8 667.6 194.3 C669 194.6 670.3 194.5 671.4 194.3"/>
<path d="M652.8 169.6 C652 173 651.7 176.5 652 180 C652.6 183.5 653.6 186.5 655.2 188.8 C657.2 190.3 659.8 191 662.5 191.3"/>
<path d="M688.8 322 C697 321.9 705 321.8 712.5 321.2 C716 320.3 718.6 318.6 720 316.2 C721 314.2 721.2 312 720.6 310 C720 307.2 718.6 304.8 716.2 303.1 C713.6 301.3 710.6 300.2 707.5 299.4 C699.5 297.8 691 296.8 682.5 296.3 C670.5 296 658.5 296 646.4 296.3 C644.3 297 643.2 298.3 643.2 300 C643.8 303.6 645 307 646.3 310 C648 313.6 650 317 652.5 320 C654.6 322.6 657 324.6 660 325.6 C670 326.4 680 326.5 690 326.2 C692 325.4 693.6 324 695 322.5"/>
</svg>
</body></html>
